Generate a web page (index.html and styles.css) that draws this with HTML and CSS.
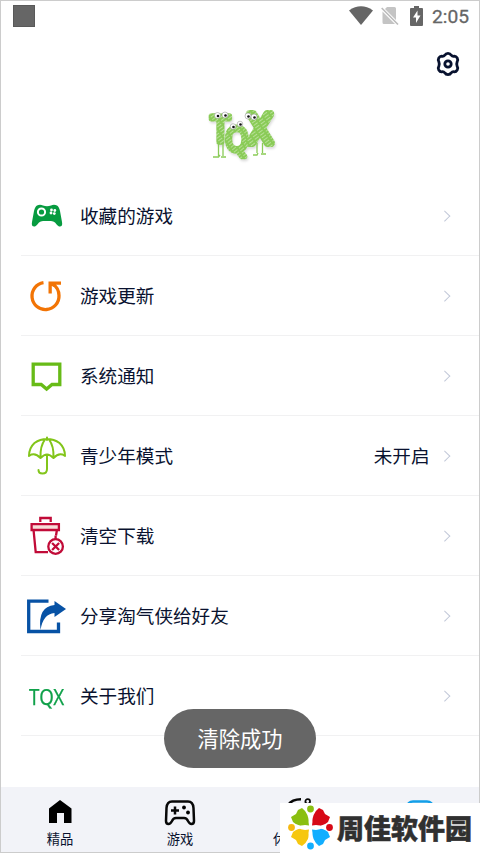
FILE: index.html
```html
<!DOCTYPE html>
<html lang="zh-CN">
<head>
<meta charset="utf-8">
<title>我的</title>
<link rel="stylesheet" href="styles.css">
</head>
<body>
<div class="screen">
  <header class="status">
    <span class="status-app"></span>
    <div class="status-right">
      <svg class="wifi" width="24" height="20" viewBox="0 0 24 20"><path d="M0 4.500Q12-3.800 24 4.500L12 19Z"/></svg>
      <svg class="sim" width="18" height="20" viewBox="0 0 18 20"><path d="M6 1H13.500Q15 1 15 2.500V14L4 3ZM1.500 5.500 14 18H3Q1.500 18 1.500 16.500Z"/><path class="slash" d="M.7 2 17 18.500"/></svg>
      <svg class="battery" width="13" height="20" viewBox="0 0 13 20"><path d="M4 0H9V2H12Q13 2 13 3V19Q13 20 12 20H1Q0 20 0 19V3Q0 2 1 2H4Z"/><path class="bolt" d="M7.500 4.500 3 11.500H6V17L10.500 9.500H7.500Z"/></svg>
      <span class="clock">2:05</span>
    </div>
  </header>
  <div class="toolbar">
    <svg class="gear" width="26" height="26" viewBox="0 0 26 26"><path d="M9.800 4.200Q10.800 2.400 13 2.400Q15.200 2.400 16.200 4.200Q17.400 5.600 19.200 5.200Q21 5 22.200 7Q23.300 9 22.200 10.600Q21.200 13 22.200 15.400Q23.300 17 22.200 19Q21 21 19.200 20.800Q17.400 20.400 16.200 21.800Q15.200 23.600 13 23.600Q10.800 23.600 9.800 21.800Q8.600 20.400 6.800 20.800Q5 21 3.800 19Q2.700 17 3.800 15.400Q4.800 13 3.800 10.600Q2.700 9 3.800 7Q5 5 6.800 5.200Q8.600 5.600 9.800 4.200Z"/><circle cx="13" cy="13" r="3.200"/></svg>
  </div>
  <div class="brand">
    <svg width="74" height="58" viewBox="0 0 74 58">
      <defs>
        <pattern id="scribble" width="7" height="3" patternUnits="userSpaceOnUse" patternTransform="rotate(-35)"><rect width="7" height="3" fill="#8acb57"/><path d="M0 .5H5" stroke="#c4e6a8" stroke-width=".8"/></pattern>
      </defs>
      <g class="brand-letters" fill="url(#scribble)" stroke="url(#scribble)">
        <text transform="translate(8 38) scale(.95 1)" font-size="36" stroke-width="5.500">T</text>
        <text transform="translate(22.500 47) scale(.88 1)" font-size="33" stroke-width="5.500">Q</text>
        <text transform="translate(46 39) scale(.96 1)" font-size="40" stroke-width="8">X</text>
      </g>
      <g class="legs"><path d="M15.500 39V52M20 39V52M10 53H15.500L17 51M18 53H23M54 39V49M59.500 39V49M50 51H54L55 49M58 50H63"/></g>
      <g class="eyes"><circle cx="14.500" cy="11.500" r="3"/><circle cx="22" cy="11" r="3"/><circle cx="30" cy="22.500" r="2.800"/><circle cx="37" cy="20" r="2.800"/><circle cx="45" cy="12" r="3"/><circle cx="51" cy="13" r="3"/></g>
      <g class="pupils"><circle cx="15" cy="12" r="1.300"/><circle cx="22.500" cy="11.500" r="1.300"/><circle cx="30.500" cy="23" r="1.300"/><circle cx="37.500" cy="20.500" r="1.300"/><circle cx="45.500" cy="12.500" r="1.300"/><circle cx="51.500" cy="13.500" r="1.300"/></g>
    </svg>
  </div>
  <main class="menu">
    <div class="row">
      <span class="icon"><svg width="40" height="40" viewBox="0 0 40 40"><path fill="#079b40" d="M10 9.500Q13 8 16 9.500Q20 11 24 9.500Q27 8 30 9.500Q32 10.500 33 15L35 26Q36 31 32 30.500Q30.500 30 28 26.500Q26.500 25 24 25H16Q13.500 25 12 26.500Q9.500 30 8 30.500Q4 31 5 26L7 15Q8 10.500 10 9.500Z"/><circle cx="14.500" cy="16" r="3.600" fill="none" stroke="#fff" stroke-width="2"/><g fill="#fff"><circle cx="24.500" cy="14" r="1.400"/><circle cx="27.800" cy="14.500" r="1.400"/><circle cx="24" cy="17" r="1.400"/><circle cx="27.300" cy="17.600" r="1.400"/></g></svg></span>
      <span class="label">收藏的游戏</span><i class="chevron"></i>
    </div>
    <div class="row">
      <span class="icon"><svg width="40" height="40" viewBox="0 0 40 40"><path fill="none" stroke="#f27405" stroke-width="3.300" d="M16.500 6.700A13.500 13.500 0 1 0 32 19.500Q32 12.500 26 8"/><path fill="#f27405" d="M21.500 5.500H34V8.800H29L27 11L24.800 10V17.500H21.500Z"/></svg></span>
      <span class="label">游戏更新</span><i class="chevron"></i>
    </div>
    <div class="row">
      <span class="icon"><svg width="40" height="40" viewBox="0 0 40 40"><path fill="none" stroke="#67bb17" stroke-width="3.300" d="M6.200 8.200H32.800V28.500H25L19.600 33L14.200 28.500H6.200Z"/></svg></span>
      <span class="label">系统通知</span><i class="chevron"></i>
    </div>
    <div class="row">
      <span class="icon"><svg width="40" height="40" viewBox="0 0 40 40"><g fill="none" stroke="#82c51a" stroke-width="2" stroke-linecap="round" stroke-linejoin="round"><path d="M20 1.500V4M2 20Q2 12 7.500 7Q13 3 20 3Q27 3 32.500 7Q38 12 38 20L35.500 18.500Q31 17 26.500 22Q23 18.500 20 18.500Q17 18.500 13.500 22Q9 17 4.500 18.500ZM18 3.500Q13 10 13.500 22M22 3.500Q27 10 26.500 22M20 18.500V33Q20 37.500 15.500 37.500Q11.500 37.500 11.500 34"/></g></svg></span>
      <span class="label">青少年模式</span><span class="value">未开启</span><i class="chevron"></i>
    </div>
    <div class="row">
      <span class="icon"><svg width="40" height="40" viewBox="0 0 40 40"><g fill="none" stroke="#c10b38" stroke-width="2.300"><path d="M13.300 6V2H23.700V6M6.500 13.500 8.700 36.200H21M30 13.500 29 19.500"/><path fill="#f7dcd8" d="M4.600 8.200H31.900V14H4.600Z"/><circle cx="28.600" cy="30.500" r="7.300" fill="#fff"/><path d="M25.100 27 32.100 34M32.100 27 25.100 34M28.600 23V19.500"/></g></svg></span>
      <span class="label">清空下载</span><i class="chevron"></i>
    </div>
    <div class="row">
      <span class="icon"><svg width="40" height="40" viewBox="0 0 40 40"><path fill="none" stroke="#0752a5" stroke-width="3.300" d="M21.500 5.100H1.700V35.500H31.500V26.500"/><path fill="#0752a5" d="M27.500 5 39 13 27.500 21V17Q16 18 13.500 34Q10.500 10.500 27.500 9Z"/></svg></span>
      <span class="label">分享淘气侠给好友</span><i class="chevron"></i>
    </div>
    <div class="row">
      <span class="icon"><span class="tqx">TQX</span></span>
      <span class="label">关于我们</span><i class="chevron"></i>
    </div>
  </main>
  <nav class="tabs">
    <div class="tab"><svg width="32" height="28" viewBox="0 0 32 28"><path d="M5 8.500 16 0 27.500 8.500V23H20V13H13V23H5Z"/></svg><span>精品</span></div>
    <div class="tab"><svg width="32" height="28" viewBox="0 0 32 28"><path class="line" d="M8 1.500H24Q29 1.500 29.500 8L30 21Q30 24 27.500 24Q25.500 24 24 21Q22.800 18 20 18H12Q9.200 18 8 21Q6.500 24 4.500 24Q2 24 2 21L2.500 8Q3 1.500 8 1.500ZM7 10.500H15M11 6.500V14.500"/><circle cx="20" cy="7.500" r="1.900"/><circle cx="24" cy="12.500" r="1.900"/></svg><span>游戏</span></div>
    <div class="tab leisure"><svg width="32" height="28" viewBox="0 0 32 28"><path class="line" d="M4 5Q8-.8 17-.8"/><circle class="line ring" cx="23.700" cy="1.500" r="2.300"/></svg><span>休</span></div>
    <div class="tab mine"><svg width="32" height="28" viewBox="0 0 32 28"><rect class="line" x="3" y="1.500" width="26" height="22" rx="6"/></svg></div>
  </nav>
</div>
<div class="toast">清除成功</div>
<div class="watermark">
  <svg width="46" height="46" viewBox="0 0 46 46">
    <path fill="#8abf10" d="M3 12 8 9 10 5 14 3Q21 8 21.500 21Q10 22 5 17Z"/><path fill="#d70916" d="M31 3 35 5 37 9 42 12 40 17Q35 22 23.500 21Q24 8 31 3Z"/><path fill="#f6c710" d="M3 32 5 27Q10 22 21.500 23.500Q22 36 14 41L10 39 8 35Z"/><path fill="#12aeff" d="M23.500 23.500Q35 22 40 27L42 32 37 35 35 39 31 41Q24 36 23.500 23.500Z"/>
    <path fill="#fff" d="M22.500 9Q25.500 14 24 20.500Q31 19 35 22.500Q31 26 24 24.500Q25.500 31 22.500 36Q19.500 31 21 24.500Q14 26 10 22.500Q14 19 21 20.500Q19.500 14 22.500 9Z"/>
    <circle cx="22.500" cy="4" r="3.400" fill="#8abf10"/><circle cx="41.500" cy="22.500" r="3.400" fill="#d70916"/><circle cx="3.500" cy="22.500" r="3.400" fill="#f6b810"/><circle cx="22.500" cy="41" r="3.400" fill="#12aeff"/>
  </svg>
  <span>周佳软件园</span>
</div>
</body>
</html>
```
FILE: styles.css
```css
* { box-sizing: border-box; }
body {
  margin: 0;
  width: 480px;
  height: 853px;
  overflow: hidden;
  position: relative;
  background: #fff;
  color: #09122f;
  font-family: "Noto Sans CJK SC", sans-serif;
}
svg { display: block; overflow: visible; flex: none; }
.screen {
  height: 853px;
  border: 1px solid #ccc;
  display: flex;
  flex-direction: column;
}
.status {
  height: 30px;
  padding: 0 10px 0 12px;
  display: flex;
  align-items: center;
  justify-content: space-between;
}
.status-app { width: 22px; height: 22px; margin-bottom: 1px; background: #666; border: 1px solid #595959; }
.status-right { display: flex; align-items: center; fill: #666; }
.sim { margin-left: 8px; fill: #c4c4c4; }
.slash { stroke: #bbb; stroke-width: 1.6; }
.battery { margin-left: 11px; }
.bolt { fill: #fff; }
.clock {
  margin-left: 9px;
  width: 37px;
  padding-top: 1px;
  color: #666;
  font: 400 19.2px/24px Roboto, sans-serif;
  -webkit-text-stroke: .3px #666;
  white-space: nowrap;
}
.toolbar {
  height: 65px;
  padding: 0 18px;
  display: flex;
  align-items: center;
  justify-content: flex-end;
}
.gear { fill: none; stroke: #08122f; stroke-width: 2.8; }
.brand { height: 80px; padding-top: 8px; display: flex; justify-content: center; }
.brand-letters {
  font-family: "Open Sans", sans-serif;
  font-weight: 400;
  stroke-linejoin: round;
  filter: drop-shadow(1px 2px 1px #0002);
}
.legs { fill: none; stroke: #8acb57; stroke-width: 1.3; }
.eyes { fill: #fff; stroke: #888; stroke-width: .5; }
.pupils { fill: #111; }
.menu { flex: 1; padding-left: 20px; }
.row {
  height: 80px;
  padding: 0 27px 0 6px;
  border-bottom: 1px solid #f1f1f2;
  display: flex;
  align-items: center;
}
.icon { width: 40px; display: flex; justify-content: center; }
.label { margin-left: 13px; padding-bottom: 2px; flex: 1; font-size: 18.6px; line-height: 28px; }
.value { margin-right: 11px; padding-bottom: 2px; font-size: 18.6px; line-height: 28px; }
.chevron {
  width: 7.5px;
  height: 7.5px;
  margin: 1px 4px 0 0;
  border: solid #c2c8d8;
  border-width: 1.5px 1.5px 0 0;
  transform: rotate(45deg);
}
.tqx {
  margin-left: -1px;
  color: #10a14a;
  font: 22px/28px "Noto Sans", sans-serif;
  transform: scaleX(.85);
  -webkit-text-stroke: .25px #10a14a;
}
.tabs { height: 65px; display: flex; background: #f2f3f8; }
.tab {
  flex: 0 0 120px;
  padding-top: 13px;
  display: flex;
  flex-direction: column;
  align-items: center;
  font-size: 13.3px;
  line-height: 20px;
}
.tab:first-child { margin-left: -1px; border-left: 1px solid #ccc; padding-right: 1px; }
.tab span { margin-top: 1px; }
.leisure span { width: 54px; }
.line { fill: none; stroke: #080808; stroke-width: 2.5; }
.ring { stroke-width: 1.8; }
.mine .line { stroke: #129fe8; }
.toast {
  position: absolute;
  left: 164px;
  top: 709px;
  width: 152px;
  height: 59px;
  border-radius: 30px;
  background: #666;
  color: #fff;
  text-align: center;
  font-size: 21.3px;
  line-height: 57px;
}
.watermark {
  position: absolute;
  left: 280px;
  top: 803px;
  width: 200px;
  height: 50px;
  padding-left: 8px;
  background: #fff;
  display: flex;
  align-items: center;
  color: #303030;
  font-size: 27px;
  font-weight: 900;
  line-height: 50px;
  white-space: nowrap;
}
.watermark svg { margin-top: -1px; }
.watermark span { margin-left: 3px; -webkit-text-stroke: .5px #303030; }
```
